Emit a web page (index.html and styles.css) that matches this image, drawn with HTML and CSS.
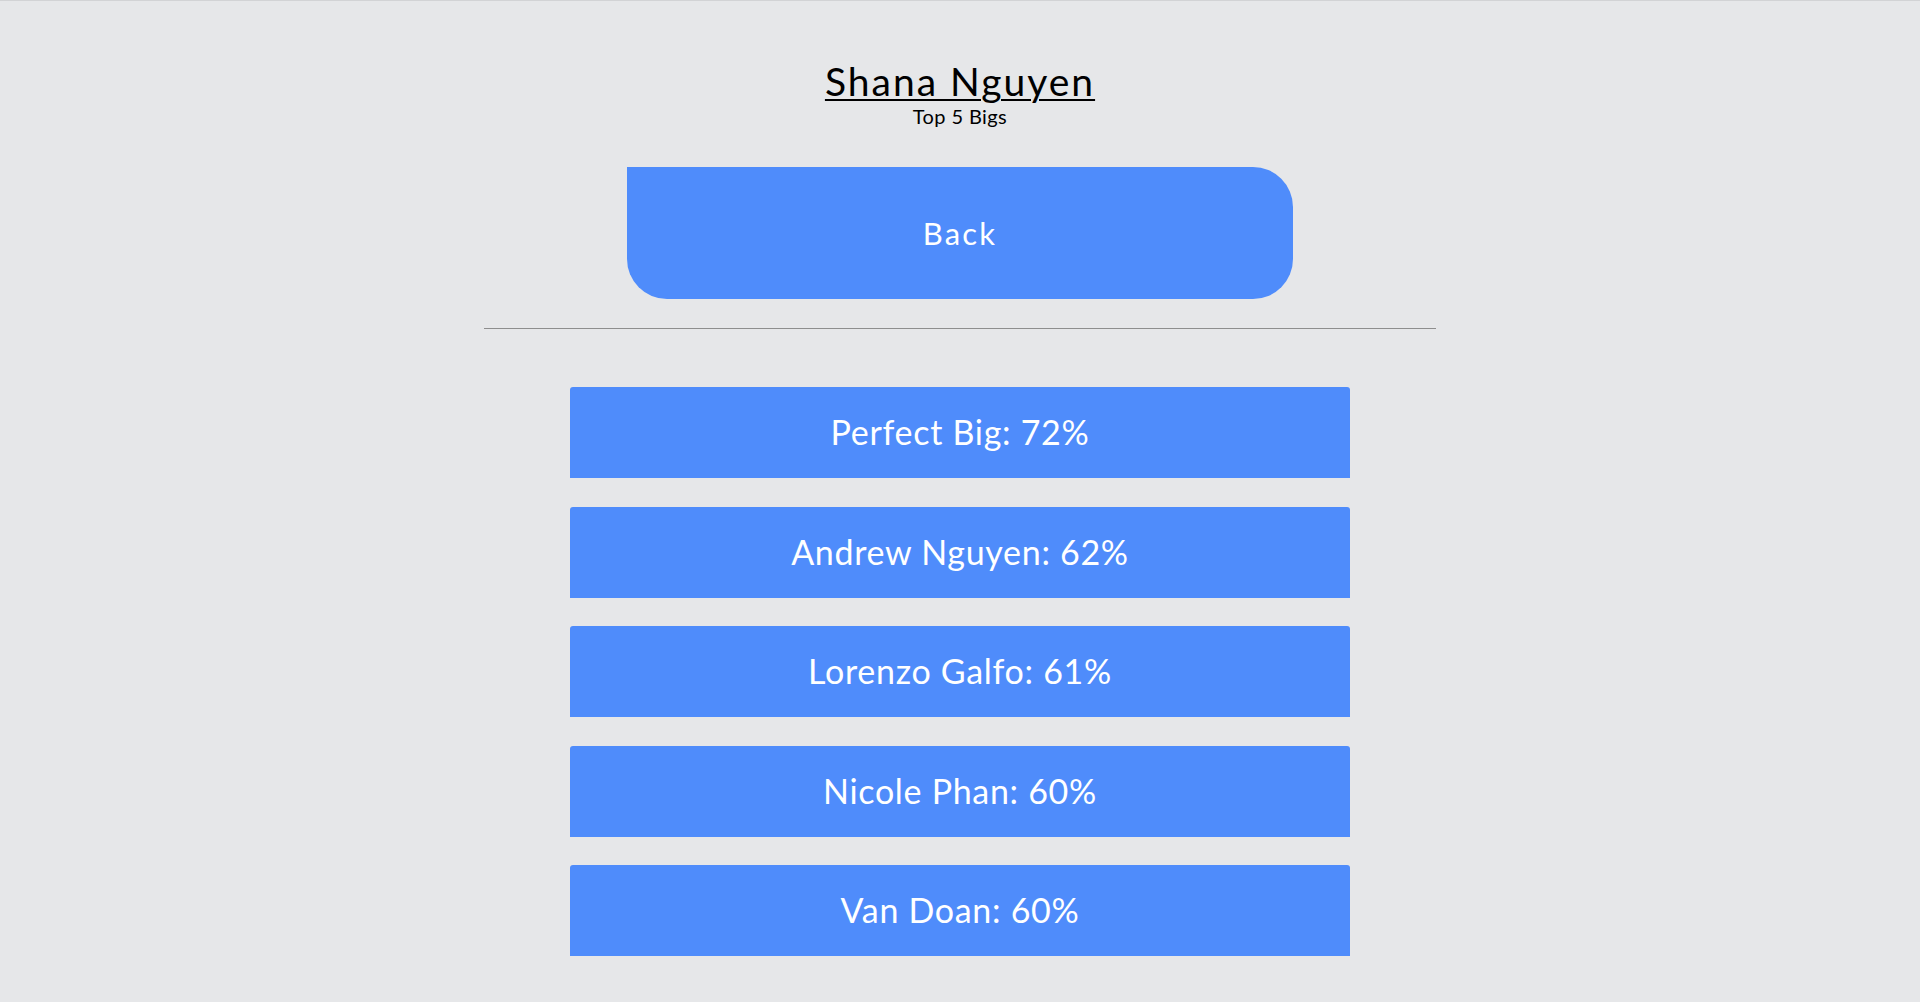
FILE: index.html
```html
<!DOCTYPE html>
<html lang="en">
<head>
<meta charset="utf-8">
<title>Shana Nguyen - Top 5 Bigs</title>
<link rel="stylesheet" href="styles.css">
</head>
<body>
<header class="header">
  <h1 class="title"><a class="title-link" href="#">Shana Nguyen</a></h1>
  <p class="subtitle">Top 5 Bigs</p>
</header>
<button class="back" type="button">Back</button>
<hr class="divider">
<ul class="bigs">
  <li class="big">Perfect Big: 72%</li>
  <li class="big">Andrew Nguyen: 62%</li>
  <li class="big">Lorenzo Galfo: 61%</li>
  <li class="big">Nicole Phan: 60%</li>
  <li class="big">Van Doan: 60%</li>
</ul>
</body>
</html>
```
FILE: styles.css
```css
html {
  background: #e6e7e9;
  border-top: 1px solid #d2d3d5;
}
body {
  margin: 0 8px;
  font-family: Lato, "Open Sans", sans-serif;
  color: #000;
}
.header {
  text-align: center;
  padding-top: 58px;
}
.title {
  margin: 0;
  font-size: 39px;
  font-weight: 400;
  line-height: 44px;
  letter-spacing: 2px;
}
.title-link {
  color: #000;
  text-decoration: underline;
  text-decoration-thickness: 2px;
  text-underline-offset: 3px;
}
.subtitle {
  margin: 2px 0 0;
  font-size: 20px;
  line-height: 22px;
  letter-spacing: 0.4px;
}
.back {
  display: flex;
  align-items: center;
  justify-content: center;
  width: 35%;
  height: 132px;
  margin: 40px auto 0;
  border: none;
  border-radius: 0 40px 40px 40px;
  background: #4f8cfb;
  color: #fff;
  font-family: inherit;
  font-size: 31px;
  letter-spacing: 2.2px;
}
.divider {
  width: 50%;
  margin: 29px auto 0;
  border: none;
  border-top: 1px solid #8e8e8e;
  height: 0;
}
.bigs {
  list-style: none;
  margin: 58px auto 0;
  padding: 0;
  width: 41%;
  display: flex;
  flex-direction: column;
  gap: 28.5px;
}
.big {
  height: 91px;
  box-sizing: border-box;
  padding-bottom: 2px;
  display: flex;
  align-items: center;
  justify-content: center;
  background: #4f8cfb;
  border-radius: 3px 3px 0 0;
  color: #fff;
  font-size: 34px;
  letter-spacing: 0.7px;
}
```
